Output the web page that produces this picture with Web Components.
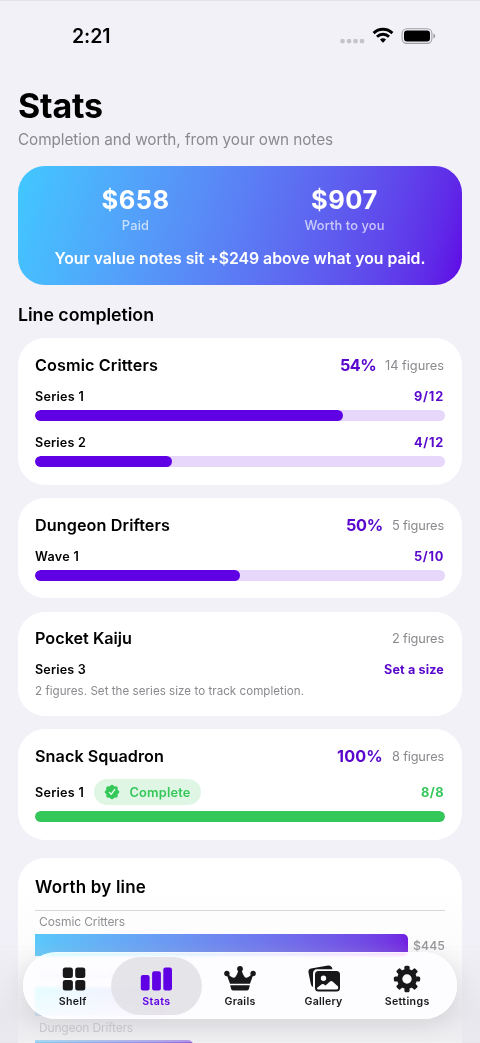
<!DOCTYPE html>
<html lang="en">
<head>
<meta charset="utf-8">
<meta name="viewport" content="width=device-width, initial-scale=1">
<title>Stats</title>
<style>
  html, body {
    margin: 0;
    height: 1043px;
    overflow: hidden;
    background: #f2f1f8;
  }
  body {
    font-family: Inter, "Liberation Sans", sans-serif;
    color: #000;
    --accent: #5f00e5;
    --accent-text: #5907cc;
    --green: #34c759;
    --muted: #8a8a8e;
  }
</style>
</head>
<body>
<stats-app></stats-app>

<script>
class FitText extends HTMLElement {
  // <fit-text size weight width> one line of text, tracked to a fixed width
  constructor() {
    super();
    this.attachShadow({ mode: 'open' });
    this.shadowRoot.innerHTML = `
      <style>
        :host { display: block; white-space: nowrap; line-height: 1.2; }
        span { display: inline-block; }
      </style>
      <span><slot></slot></span>
    `;
  }

  connectedCallback() {
    this.style.fontSize = `${this.getAttribute('size')}px`;
    this.style.fontWeight = this.getAttribute('weight') || 400;
    const width = Number(this.getAttribute('width'));
    if (!width) return;
    const $span = this.shadowRoot.querySelector('span');
    const count = this.textContent.length;
    const spacing = (width - $span.getBoundingClientRect().width) / count;
    this.style.letterSpacing = `${spacing.toFixed(3)}px`;
  }
}
customElements.define('fit-text', FitText);

class StatusBar extends HTMLElement {
  constructor() {
    super();
    this.attachShadow({ mode: 'open' });
    this.shadowRoot.innerHTML = `
      <style>
        :host {
          display: flex;
          justify-content: space-between;
          align-items: center;
          height: 72px;
          padding: 0 44px 0 72px;
          box-sizing: border-box;
          border-top: 1px solid #e5e4ea;
        }
        .icons { display: flex; align-items: center; margin-top: -2px; }
      </style>
      <fit-text size="19.5" weight="600" width="38.5">2:21</fit-text>
      <div class="icons">
        <svg width="96" height="20" viewBox="0 0 96 20">
          <g fill="#c3c3c9">
            <rect x="0.4" y="13" width="4.3" height="4.3" rx="1.4"/>
            <rect x="6.9" y="13" width="4.3" height="4.3" rx="1.4"/>
            <rect x="13.4" y="13" width="4.3" height="4.3" rx="1.4"/>
            <rect x="19.9" y="13" width="4.3" height="4.3" rx="1.4"/>
          </g>
          <g fill="none" stroke="#000" stroke-width="2.9">
            <path d="M33.6 7.1 A13.4 13.4 0 0 1 52.4 7.1"/>
            <path d="M37 10.7 A8.5 8.5 0 0 1 49 10.7"/>
          </g>
          <path d="M40 13.5 Q43 11.2 46 13.5 L43.6 16.2 Q43 16.8 42.4 16.2Z"/>
          <rect x="62.1" y="2.7" width="29.8" height="14.7" rx="4.6" fill="none" stroke="#9f9fa5" stroke-width="1.1"/>
          <rect x="64" y="4.6" width="26" height="10.9" rx="2.9"/>
          <path d="M93.4 7.6 Q95.3 8.4 95.3 10 Q95.3 11.7 93.4 12.5Z" fill="#9f9fa5"/>
        </svg>
      </div>
    `;
  }
}
customElements.define('status-bar', StatusBar);

class WorthSummary extends HTMLElement {
  constructor() {
    super();
    this.attachShadow({ mode: 'open' });
    this.shadowRoot.innerHTML = `
      <style>
        :host {
          display: block;
          height: 118.5px;
          margin-top: 17px;
          padding-top: 18.5px;
          box-sizing: border-box;
          border-radius: 27px;
          color: #fff;
          background: linear-gradient(105deg in oklab, #40c8ff, #5f00e5);
        }
        .totals { display: grid; grid-template-columns: 1fr 1fr; padding: 0 13px; }
        .total { display: flex; flex-direction: column; align-items: center; }
        .label { margin-top: 2.5px; color: rgba(255, 255, 255, 0.68); }
        .note { display: flex; justify-content: center; margin-top: 16.5px; }
      </style>
      <div class="totals">
        <div class="total">
          <fit-text size="25.5" weight="650" width="68">$658</fit-text>
          <fit-text class="label" size="12.8" weight="500" width="27.5">Paid</fit-text>
        </div>
        <div class="total">
          <fit-text size="25.5" weight="650" width="67">$907</fit-text>
          <fit-text class="label" size="12.8" weight="500" width="80">Worth to you</fit-text>
        </div>
      </div>
      <div class="note"><fit-text size="15.8" weight="600" width="371">Your value notes sit +$249 above what you paid.</fit-text></div>
    `;
  }
}
customElements.define('worth-summary', WorthSummary);

class LineCard extends HTMLElement {
  constructor() {
    super();
    this.attachShadow({ mode: 'open' });
    this.shadowRoot.innerHTML = `
      <style>
        :host {
          display: block;
          box-sizing: border-box;
          padding: 16.6px 17px 0;
          border-radius: 27px;
          background: #fff;
        }
        .header { display: flex; align-items: center; height: 21px; }
        .figures { display: flex; align-items: center; gap: 9px; margin: 0 1px 0 auto; }
        ::slotted([slot="percent"]) { color: var(--accent-text); }
        ::slotted([slot="count"]) { color: var(--muted); }
      </style>
      <div class="header">
        <slot name="title"></slot>
        <div class="figures">
          <slot name="percent"></slot>
          <slot name="count"></slot>
        </div>
      </div>
      <slot></slot>
    `;
  }
}
customElements.define('line-card', LineCard);

class SeriesRow extends HTMLElement {
  constructor() {
    super();
    this.attachShadow({ mode: 'open' });
    const progress = this.getAttribute('progress');
    this.shadowRoot.innerHTML = `
      <style>
        :host { display: block; margin-top: 12.4px; color: var(--accent-text); }
        :host([complete]) { color: var(--green); }
        .row { display: flex; align-items: center; height: 16px; }
        :host([complete]) .row { height: 26px; }
        ::slotted([slot="name"]) { color: #000; }
        .value { margin: 0 1px 0 auto; }
        .track {
          height: 11px;
          margin-top: 5.6px;
          border-radius: 6px;
          overflow: hidden;
          background: #e6d7fb;
        }
        .fill { height: 100%; border-radius: 6px; background: var(--accent); }
        :host([complete]) .fill { background: var(--green); }
      </style>
      <div class="row">
        <slot name="name"></slot>
        <slot name="badge"></slot>
        <div class="value"><slot></slot></div>
      </div>
      ${
        progress
          ? `<div class="track"><div class="fill" style="width: ${progress}%"></div></div>`
          : ''
      }
    `;
  }
}
customElements.define('series-row', SeriesRow);

class CompleteBadge extends HTMLElement {
  constructor() {
    super();
    this.attachShadow({ mode: 'open' });
    this.shadowRoot.innerHTML = `
      <style>
        :host {
          display: flex;
          align-items: center;
          gap: 9.5px;
          height: 26px;
          width: 107px;
          padding-left: 10px;
          margin-left: 10px;
          box-sizing: border-box;
          border-radius: 13px;
          color: var(--green);
          background: #e0f6e5;
        }
      </style>
      <svg width="16" height="16" viewBox="-8 -8 16 16">
        <g fill="#34c759">
          <circle r="6"/>
          <circle cx="0" cy="-5.2" r="2.1"/><circle cx="3.7" cy="-3.7" r="2.1"/>
          <circle cx="5.2" cy="0" r="2.1"/><circle cx="3.7" cy="3.7" r="2.1"/>
          <circle cx="0" cy="5.2" r="2.1"/><circle cx="-3.7" cy="3.7" r="2.1"/>
          <circle cx="-5.2" cy="0" r="2.1"/><circle cx="-3.7" cy="-3.7" r="2.1"/>
        </g>
        <path d="M-2.6 .4 L-.8 2.4 L2.7 -2.5" fill="none" stroke="#e9faee" stroke-width="1.3" stroke-linecap="round" stroke-linejoin="round"/>
      </svg>
      <fit-text size="12.8" weight="600" width="61">Complete</fit-text>
    `;
  }
}
customElements.define('complete-badge', CompleteBadge);

class WorthChart extends HTMLElement {
  constructor() {
    super();
    this.attachShadow({ mode: 'open' });
    this.shadowRoot.innerHTML = `
      <style>
        :host {
          display: block;
          height: 220px;
          margin-top: 18px;
          padding: 19px 17px 0;
          box-sizing: border-box;
          border-radius: 27px 27px 0 0;
          background: #fff;
        }
        .plot { margin-top: 12.5px; border-top: 1px solid #d6d6da; color: #8a8a8e; }
        .name { height: 15px; padding: 4.5px 0 4px 4px; }
        .bar-row { display: flex; gap: 5px; height: 29.5px; }
        .bar {
          height: 29px;
          border-radius: 0 5px 5px 0;
          background: linear-gradient(95deg in oklab, #48c4fd, #6303e2);
        }
        .bar.first { height: 22px; }
        .amount { padding-top: 4.5px; }
      </style>
      <fit-text size="17" weight="600" width="111">Worth by line</fit-text>
      <div class="plot">
        <div class="name"><fit-text size="12" width="86">Cosmic Critters</fit-text></div>
        <div class="bar-row">
          <div class="bar first" style="width: 373px"></div>
          <fit-text class="amount" size="12.3" weight="500" width="32">$445</fit-text>
        </div>
        <div class="name"><fit-text size="12" width="91">Snack Squadron</fit-text></div>
        <div class="bar-row"><div class="bar" style="width: 131px"></div></div>
        <div class="name"><fit-text size="12" width="94">Dungeon Drifters</fit-text></div>
        <div class="bar-row"><div class="bar" style="width: 158px"></div></div>
      </div>
    `;
  }
}
customElements.define('worth-chart', WorthChart);

class TabItem extends HTMLElement {
  constructor() {
    super();
    this.attachShadow({ mode: 'open' });
    this.shadowRoot.innerHTML = `
      <style>
        :host {
          display: flex;
          flex: 1;
          flex-direction: column;
          align-items: center;
          height: 58px;
          padding-top: 6px;
          box-sizing: border-box;
          color: #18181b;
        }
        :host([selected]) {
          margin: 0 -4px;
          padding-left: 4px;
          padding-right: 4px;
          border-radius: 29px;
          color: var(--accent);
          background: rgba(222, 222, 226, 0.75);
        }
        .icon { height: 33.5px; display: flex; }
        ::slotted(svg) { display: block; fill: currentColor; }
      </style>
      <div class="icon"><slot name="icon"></slot></div>
      <slot></slot>
    `;
  }
}
customElements.define('tab-item', TabItem);

class TabBar extends HTMLElement {
  constructor() {
    super();
    this.attachShadow({ mode: 'open' });
    this.shadowRoot.innerHTML = `
      <style>
        :host {
          position: absolute;
          left: 0;
          right: 0;
          bottom: 0;
          height: 153px;
        }
        .fade {
          height: 100%;
          background: linear-gradient(rgba(240, 240, 245, 0), rgba(231, 230, 236, 0.12) 35%, rgba(230, 229, 234, 0.85) 82%, rgba(229, 228, 233, 0.6));
          box-sizing: border-box;
          border-bottom: 1px solid #dbdadf66;
        }
        nav {
          display: flex;
          align-items: center;
          height: 67px;
          margin: -91px 23px 0;
          padding: 0 8px;
          box-sizing: border-box;
          border-radius: 34px;
          position: relative;
          background: rgba(253, 252, 255, 0.85);
          backdrop-filter: blur(1.5px) saturate(3) brightness(1.1);
          box-shadow: 0 5px 24px rgba(0, 0, 0, 0.1), inset 0 0 2px 1px rgba(255, 255, 255, 0.8);
        }
      </style>
      <div class="fade"></div>
      <nav>
        <tab-item>
          <svg slot="icon" width="32" height="32" viewBox="0 0 32 32">
            <rect x="5.8" y="4.5" width="10.1" height="10.5" rx="2.5"/>
            <rect x="18.2" y="4.5" width="10.1" height="10.5" rx="2.5"/>
            <rect x="5.8" y="17" width="10.1" height="10.5" rx="2.5"/>
            <rect x="18.2" y="17" width="10.1" height="10.5" rx="2.5"/>
          </svg>
          <fit-text size="10.6" weight="600" width="28">Shelf</fit-text>
        </tab-item>
        <tab-item selected>
          <svg slot="icon" width="32" height="32" viewBox="0 0 32 32">
            <rect x=".8" y="12" width="8.8" height="15.5" rx="2.2"/>
            <rect x="12.1" y="8.2" width="8.8" height="19.3" rx="2.2"/>
            <rect x="23.3" y="4.5" width="8.7" height="23" rx="2.2"/>
          </svg>
          <fit-text size="10.6" weight="600" width="28.5">Stats</fit-text>
        </tab-item>
        <tab-item>
          <svg slot="icon" width="34" height="32" viewBox="0 0 34 32">
            <path d="M3.5 11 L5 10.5 Q8.5 15 11.3 14.8 Q13.8 13 15.5 7 H18.5 Q20.2 13 22.7 14.8 Q25.5 15 29 10.5 L30.5 11 L27 20.8 H7Z"/>
            <circle cx="17" cy="5.8" r="2.9"/><circle cx="3.9" cy="10.5" r="2.7"/><circle cx="30.1" cy="10.5" r="2.7"/>
            <path d="M7.2 22.3 H26.8 L26 25.6 Q25.5 27.5 24 27.5 H10 Q8.5 27.5 8 25.6Z"/>
          </svg>
          <fit-text size="10.6" weight="600" width="31">Grails</fit-text>
        </tab-item>
        <tab-item>
          <svg slot="icon" width="34" height="32" viewBox="0 0 34 32">
            <path d="M4 5.6 L21 2.6 Q24.5 2.1 25.5 6.3 H10 Q6 6.5 6 10.5 V24 Q4.3 23.5 3.7 20.5 L1.5 9.5 Q1 6.2 4 5.6Z"/>
            <path fill-rule="evenodd" d="M11.5 8 H29.5 Q33 8 33 11.5 V25 Q33 28.5 29.5 28.5 H11.5 Q8 28.5 8 25 V11.5 Q8 8 11.5 8Z M9.9 25 Q9.9 26.6 11.5 26.6 H29.5 Q31.1 26.6 31.1 25 V23.5 L25.5 18.5 Q24.2 17.5 23 18.5 L18.5 22.6 L16.8 21.3 Q15.8 20.5 14.7 21.3Z M16.5 12.6 A2.7 2.7 0 1 0 16.5 18 A2.7 2.7 0 1 0 16.5 12.6Z"/>
          </svg>
          <fit-text size="10.6" weight="600" width="38">Gallery</fit-text>
        </tab-item>
        <tab-item>
          <svg slot="icon" width="32" height="32" viewBox="-16 -16 32 32">
            <circle r="7.3" fill="none" stroke="currentColor" stroke-width="5.2"/>
            <g>
              <rect x="-2.6" y="-13.2" width="5.2" height="5" rx="1.5"/>
              <rect x="-2.6" y="-13.2" width="5.2" height="5" rx="1.5" transform="rotate(45)"/>
              <rect x="-2.6" y="-13.2" width="5.2" height="5" rx="1.5" transform="rotate(90)"/>
              <rect x="-2.6" y="-13.2" width="5.2" height="5" rx="1.5" transform="rotate(135)"/>
              <rect x="-2.6" y="-13.2" width="5.2" height="5" rx="1.5" transform="rotate(180)"/>
              <rect x="-2.6" y="-13.2" width="5.2" height="5" rx="1.5" transform="rotate(225)"/>
              <rect x="-2.6" y="-13.2" width="5.2" height="5" rx="1.5" transform="rotate(270)"/>
              <rect x="-2.6" y="-13.2" width="5.2" height="5" rx="1.5" transform="rotate(315)"/>
            </g>
          </svg>
          <fit-text size="10.6" weight="600" width="45">Settings</fit-text>
        </tab-item>
      </nav>
    `;
  }
}
customElements.define('tab-bar', TabBar);

class StatsApp extends HTMLElement {
  constructor() {
    super();
    this.attachShadow({ mode: 'open' });
    this.shadowRoot.innerHTML = `
      <style>
        :host {
          display: block;
          position: relative;
          height: 1043px;
          overflow: hidden;
        }
        main { padding: 0 18px; }
        .title { margin-top: 14px; }
        .subtitle { margin-top: 4px; color: var(--muted); }
        .section { margin: 19px 0 13.5px; }
        .cards { display: flex; flex-direction: column; gap: 13.5px; }
        .hint { margin-top: 7.5px; color: var(--muted); }
      </style>
      <status-bar></status-bar>
      <main>
        <fit-text class="title" size="34" weight="700" width="85">Stats</fit-text>
        <fit-text class="subtitle" size="15.3" width="315">Completion and worth, from your own notes</fit-text>
        <worth-summary></worth-summary>
        <fit-text class="section" size="17.8" weight="600" width="136">Line completion</fit-text>
        <div class="cards">
          <line-card style="height: 146.5px">
            <fit-text slot="title" size="16.2" weight="640" width="123">Cosmic Critters</fit-text>
            <fit-text slot="percent" size="16.2" weight="650" width="36">54%</fit-text>
            <fit-text slot="count" size="12.8" width="59">14 figures</fit-text>
            <series-row progress="75">
              <fit-text slot="name" size="12.6" weight="600" width="49">Series 1</fit-text>
              <fit-text size="12.8" weight="650" width="30">9/12</fit-text>
            </series-row>
            <series-row progress="33.333" style="margin-top: 13.4px">
              <fit-text slot="name" size="12.6" weight="600" width="51">Series 2</fit-text>
              <fit-text size="12.8" weight="650" width="30">4/12</fit-text>
            </series-row>
          </line-card>
          <line-card style="height: 100px">
            <fit-text slot="title" size="16.2" weight="640" width="135">Dungeon Drifters</fit-text>
            <fit-text slot="percent" size="16.2" weight="650" width="37">50%</fit-text>
            <fit-text slot="count" size="12.8" width="52">5 figures</fit-text>
            <series-row progress="50">
              <fit-text slot="name" size="12.6" weight="600" width="44">Wave 1</fit-text>
              <fit-text size="12.8" weight="650" width="30">5/10</fit-text>
            </series-row>
          </line-card>
          <line-card style="height: 104px">
            <fit-text slot="title" size="16.2" weight="640" width="97">Pocket Kaiju</fit-text>
            <fit-text slot="count" size="12.8" width="52">2 figures</fit-text>
            <series-row>
              <fit-text slot="name" size="12.6" weight="600" width="51">Series 3</fit-text>
              <fit-text size="12.6" weight="650" width="60">Set a size</fit-text>
            </series-row>
            <fit-text class="hint" size="11.6" width="269">2 figures. Set the series size to track completion.</fit-text>
          </line-card>
          <line-card style="height: 110.5px">
            <fit-text slot="title" size="16.2" weight="640" width="129">Snack Squadron</fit-text>
            <fit-text slot="percent" size="16.2" weight="650" width="46">100%</fit-text>
            <fit-text slot="count" size="12.8" width="52">8 figures</fit-text>
            <series-row progress="100" complete>
              <fit-text slot="name" size="12.6" weight="600" width="49">Series 1</fit-text>
              <complete-badge slot="badge"></complete-badge>
              <fit-text size="12.8" weight="650" width="23">8/8</fit-text>
            </series-row>
          </line-card>
        </div>
        <worth-chart></worth-chart>
      </main>
      <tab-bar></tab-bar>
    `;
  }
}
customElements.define('stats-app', StatsApp);
</script>
</body>
</html>
